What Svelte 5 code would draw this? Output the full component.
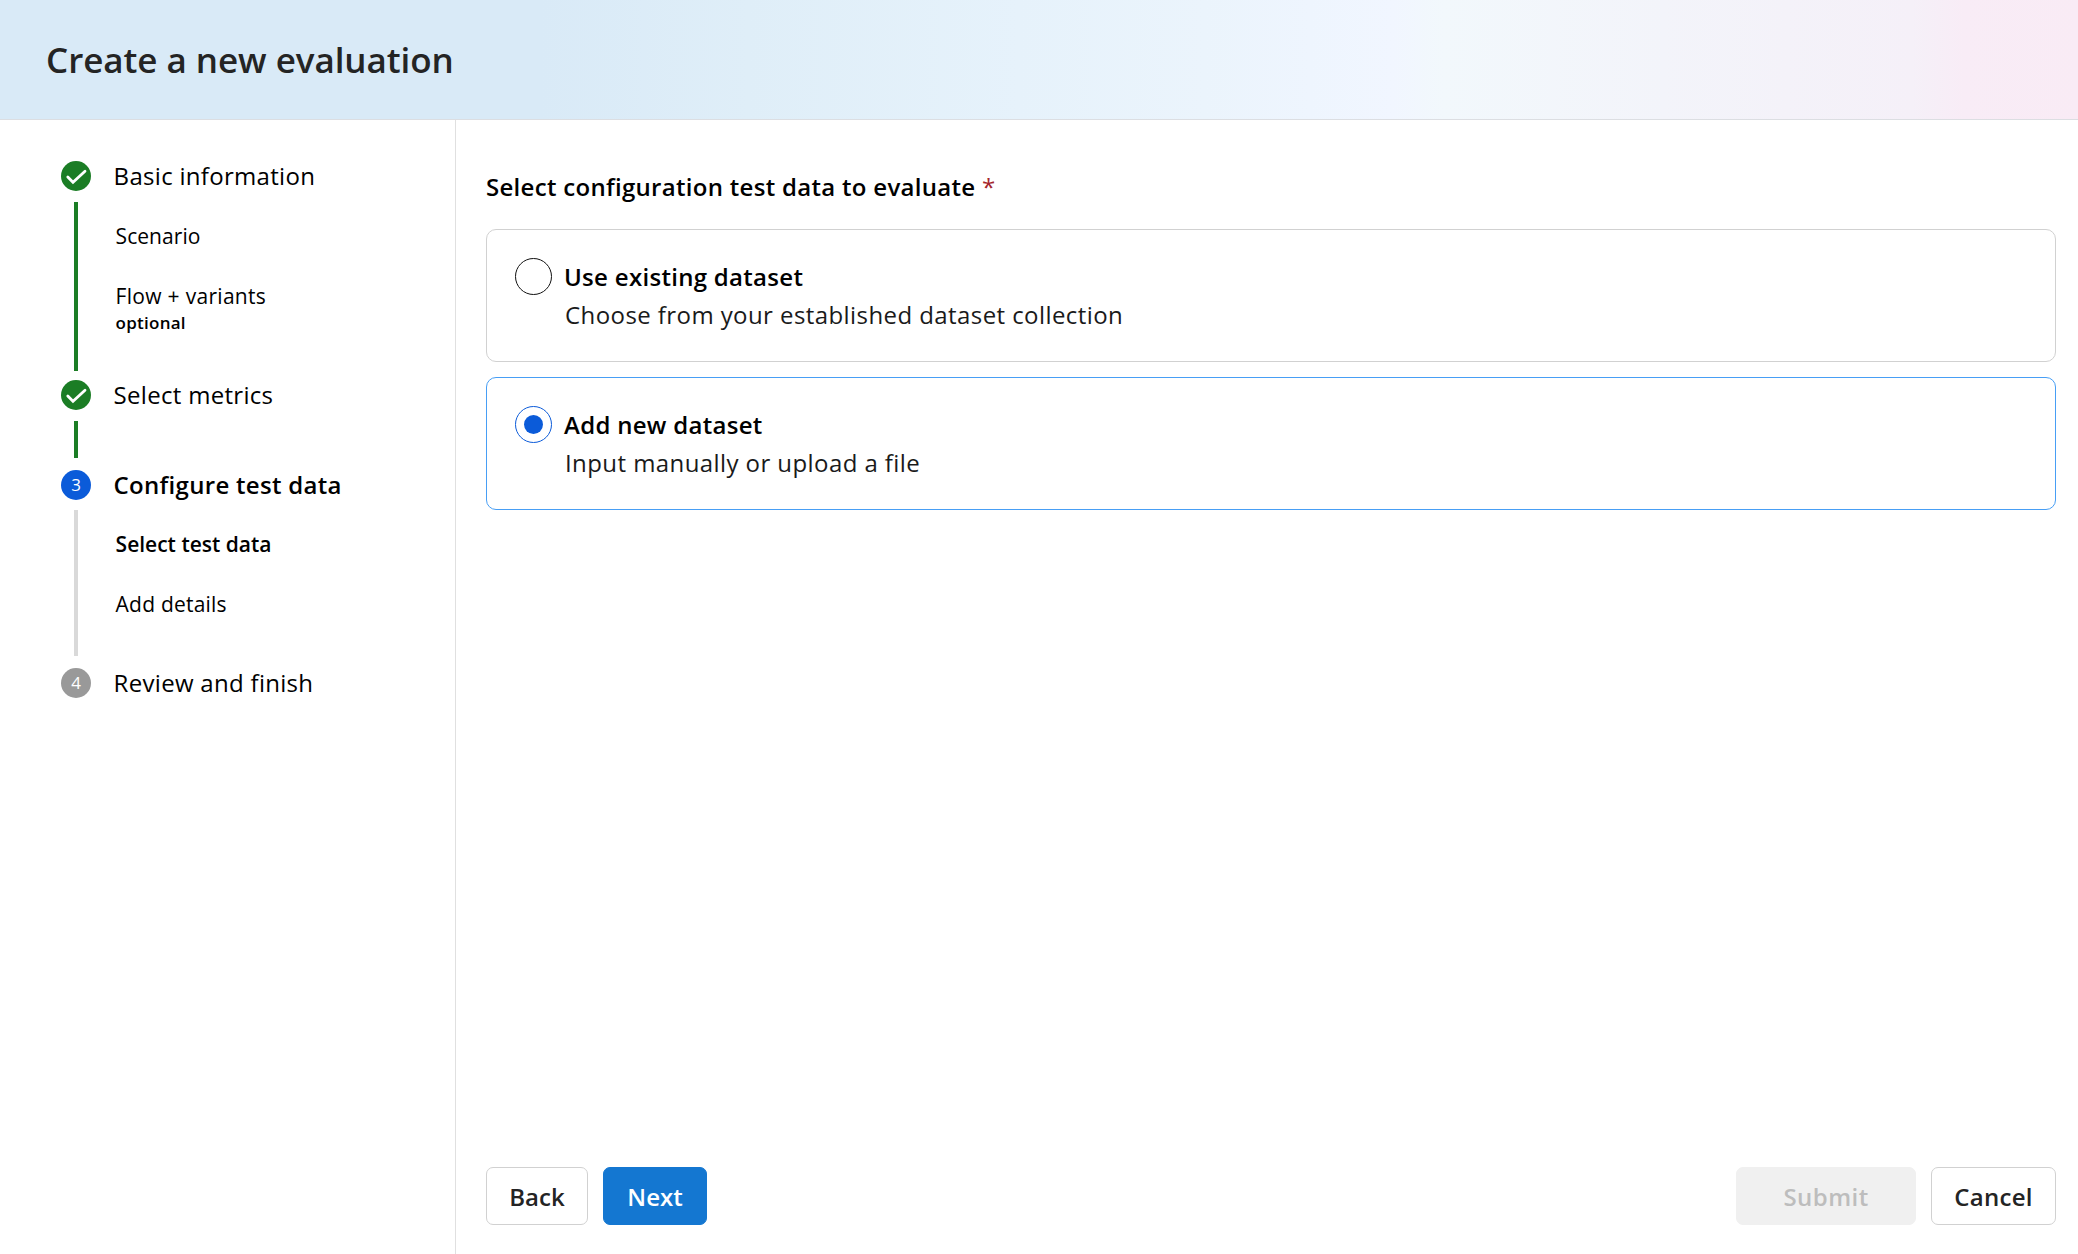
<script lang="ts">
	type Substep = { label: string; note?: string; active?: boolean; spacing: number };
	type Step = {
		label: string;
		status: 'done' | 'current' | 'upcoming';
		height: number;
		line: number;
		substeps: Substep[];
	};

	const steps: Step[] = [
		{
			label: 'Basic information',
			status: 'done',
			height: 219,
			line: 169,
			substeps: [
				{ label: 'Scenario', spacing: 0.05 },
				{ label: 'Flow + variants', note: 'optional', spacing: 0.3 }
			]
		},
		{ label: 'Select metrics', status: 'done', height: 90, line: 37, substeps: [] },
		{
			label: 'Configure test data',
			status: 'current',
			height: 198,
			line: 146,
			substeps: [
				{ label: 'Select test data', active: true, spacing: 0 },
				{ label: 'Add details', spacing: 0.22 }
			]
		},
		{ label: 'Review and finish', status: 'upcoming', height: 30, line: 0, substeps: [] }
	];

	const options = [
		{
			id: 'existing',
			title: 'Use existing dataset',
			text: 'Choose from your established dataset collection'
		},
		{ id: 'new', title: 'Add new dataset', text: 'Input manually or upload a file' }
	];

	let selected = $state('new');
</script>

<div class="page">
	<header>
		<h1>Create a new evaluation</h1>
	</header>
	<div class="body">
		<nav>
			{#each steps as step, i}
				<div class="step {step.status}" style="height: {step.height}px">
					<div class="rail">
						<div class="marker">
							{#if step.status === 'done'}
								<svg viewBox="0 0 30 30" width="30" height="30">
									<path d="M6.8 15.9 L12 21.2 L24 10.3" />
								</svg>
							{:else}
								{i + 1}
							{/if}
						</div>
						{#if step.line}
							<div class="line" style="height: {step.line}px"></div>
						{/if}
					</div>
					<div class="labels">
						<div class="label">{step.label}</div>
						{#if step.substeps.length}
							<ul>
								{#each step.substeps as sub}
									<li class:active={sub.active}>
										<span style="letter-spacing: {sub.spacing}px">{sub.label}</span>
										{#if sub.note}
											<small>{sub.note}</small>
										{/if}
									</li>
								{/each}
							</ul>
						{/if}
					</div>
				</div>
			{/each}
		</nav>
		<main>
			<h2>Select configuration test data to evaluate <span class="required">*</span></h2>
			<div class="options">
				{#each options as option}
					<button
						class="option"
						class:selected={selected === option.id}
						onclick={() => (selected = option.id)}
					>
						<span class="radio"></span>
						<span class="option-text">
							<strong>{option.title}</strong>
							<span class="description">{option.text}</span>
						</span>
					</button>
				{/each}
			</div>
			<footer>
				<button class="btn back">Back</button>
				<button class="btn next">Next</button>
				<button class="btn submit" disabled>Submit</button>
				<button class="btn cancel">Cancel</button>
			</footer>
		</main>
	</div>
</div>

<style>
	:global(body) {
		background: #fff;
	}

	.page {
		display: flex;
		flex-direction: column;
		height: 100vh;
		color: #000;
		font-family: 'Segoe UI', 'Open Sans', sans-serif;
	}

	button {
		font-family: inherit;
	}

	header {
		display: flex;
		align-items: center;
		height: 119px;
		padding-left: 46px;
		border-bottom: 1px solid #dcdee2;
		background: linear-gradient(
			90deg,
			#d9eaf7 0,
			#d9eaf7 26%,
			#dfeef8 36%,
			#e6f2fb 49%,
			#ebf4fc 58%,
			#eef5fe 63%,
			#f1f6ff 67%,
			#f2f8fc 69.5%,
			#f3f4fa 80%,
			#f5f0f8 92%,
			#f8ecf6 94.5%,
			#f9ebf5 100%
		);
	}

	h1 {
		margin: 0;
		font-size: 35px;
		font-weight: 600;
		letter-spacing: -0.05px;
		color: #242424;
	}

	.body {
		display: flex;
		flex: 1;
	}

	nav {
		box-sizing: border-box;
		width: 456px;
		padding: 41px 0 0 61px;
		border-right: 1px solid #e0e0e0;
	}

	.step {
		display: flex;
		gap: 22.6px;
	}

	.rail {
		display: flex;
		flex-direction: column;
		align-items: center;
		gap: 11px;
		width: 30px;
	}

	.marker {
		display: flex;
		align-items: center;
		justify-content: center;
		width: 30px;
		height: 30px;
		border-radius: 50%;
		color: #fff;
		font-size: 17px;
		line-height: 32px;
	}
	.marker svg path {
		fill: none;
		stroke: #fff;
		stroke-width: 2.8;
		stroke-linecap: round;
		stroke-linejoin: miter;
	}

	.line {
		width: 4px;
	}

	.done .marker,
	.done .line {
		background: #1b7d25;
	}
	.current .marker {
		background: #0b5bd9;
	}
	.current .rail {
		gap: 10px;
	}
	.current .line {
		background: #d9d9d9;
	}
	.upcoming .marker {
		background: #999;
	}

	.label {
		font-size: 24px;
		letter-spacing: 0.3px;
		line-height: 30px;
		white-space: nowrap;
	}
	.current .label {
		font-weight: 600;
	}

	ul {
		display: flex;
		flex-direction: column;
		gap: 32px;
		margin: 31px 0 0 2px;
		padding: 0;
		list-style: none;
	}
	.current ul {
		margin-top: 30px;
	}

	li {
		font-size: 21px;
		line-height: 28px;
	}
	li.active {
		font-weight: 600;
	}

	small {
		display: block;
		font-size: 17px;
		font-weight: 600;
		letter-spacing: 0.25px;
		line-height: 26px;
	}

	main {
		box-sizing: border-box;
		display: flex;
		flex: 1;
		flex-direction: column;
		padding: 51px 22px 29px 30px;
	}

	h2 {
		margin: 0;
		font-size: 24px;
		font-weight: 600;
		letter-spacing: 0.3px;
		line-height: 32px;
	}

	.required {
		color: #a4262c;
		font-weight: 400;
	}

	.options {
		display: flex;
		flex-direction: column;
		gap: 15px;
		margin-top: 26px;
	}

	.option {
		box-sizing: border-box;
		display: flex;
		gap: 12px;
		height: 133px;
		padding: 28px;
		border: 1px solid #d1d1d1;
		border-radius: 10px;
		background: #fff;
		color: #000;
		text-align: left;
	}
	.option.selected {
		border-color: #479ef5;
	}

	.radio {
		box-sizing: border-box;
		display: flex;
		align-items: center;
		justify-content: center;
		width: 37px;
		height: 37px;
		border: 1px solid #111;
		border-radius: 50%;
	}
	.selected .radio {
		border-color: #0b5bd9;
	}
	.selected .radio::after {
		width: 19px;
		height: 19px;
		border-radius: 50%;
		background: #0b5bd9;
		content: '';
	}

	.option-text {
		display: flex;
		flex-direction: column;
		font-size: 24px;
		line-height: 38px;
	}

	strong {
		font-weight: 600;
		letter-spacing: 0.3px;
	}

	.description {
		padding-left: 1px;
		letter-spacing: 0.42px;
		line-height: 37px;
		color: #1a1a1a;
	}

	footer {
		display: flex;
		gap: 15px;
		margin-top: auto;
	}

	.btn {
		box-sizing: border-box;
		height: 58px;
		padding: 0;
		border: 1px solid #d1d1d1;
		border-radius: 7px;
		background: #fff;
		color: #242424;
		font-size: 24px;
		font-weight: 600;
	}

	.back {
		width: 102px;
	}

	.next {
		width: 104px;
		border-color: #1477d1;
		background: #1477d1;
		color: #fff;
	}

	.submit {
		width: 180px;
		margin-left: auto;
		border-color: #f0f0f0;
		background: #f0f0f0;
		color: #bdbdbd;
		letter-spacing: 0.45px;
	}

	.cancel {
		width: 125px;
		letter-spacing: 0.25px;
	}
</style>
